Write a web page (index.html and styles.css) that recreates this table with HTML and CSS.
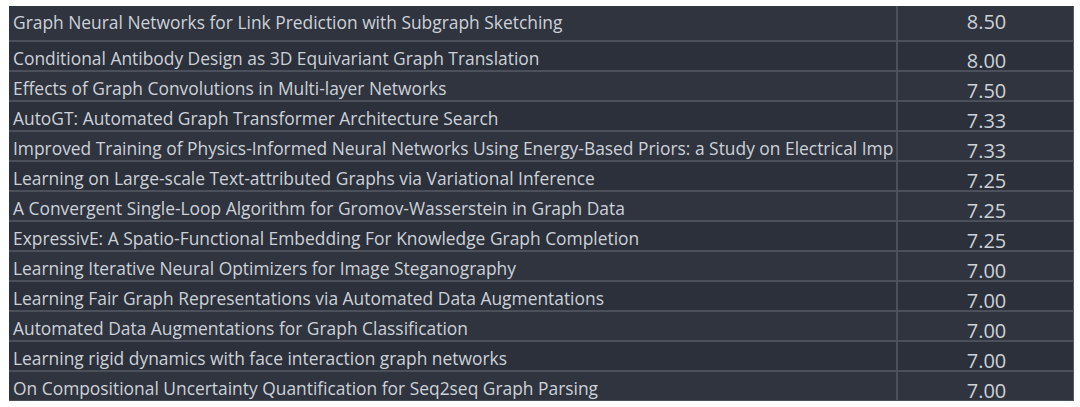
FILE: index.html
```html
<!DOCTYPE html>
<html>
<head>
<meta charset="utf-8">
<link rel="stylesheet" href="styles.css">
</head>
<body>
<div class="frame">
<table class="scores">
<colgroup><col class="c-title"><col class="c-score"></colgroup>
<tbody>
<tr class="first"><td class="title">Graph Neural Networks for Link Prediction with Subgraph Sketching</td><td class="score">8.50</td></tr>
<tr><td class="title">Conditional Antibody Design as 3D Equivariant Graph Translation</td><td class="score">8.00</td></tr>
<tr><td class="title">Effects of Graph Convolutions in Multi-layer Networks</td><td class="score">7.50</td></tr>
<tr><td class="title">AutoGT: Automated Graph Transformer Architecture Search</td><td class="score">7.33</td></tr>
<tr><td class="title">Improved Training of Physics-Informed Neural Networks Using Energy-Based Priors: a Study on Electrical Imp</td><td class="score">7.33</td></tr>
<tr><td class="title">Learning on Large-scale Text-attributed Graphs via Variational Inference</td><td class="score">7.25</td></tr>
<tr><td class="title">A Convergent Single-Loop Algorithm for Gromov-Wasserstein in Graph Data</td><td class="score">7.25</td></tr>
<tr><td class="title">ExpressivE: A Spatio-Functional Embedding For Knowledge Graph Completion</td><td class="score">7.25</td></tr>
<tr><td class="title">Learning Iterative Neural Optimizers for Image Steganography</td><td class="score">7.00</td></tr>
<tr><td class="title">Learning Fair Graph Representations via Automated Data Augmentations</td><td class="score">7.00</td></tr>
<tr><td class="title">Automated Data Augmentations for Graph Classification</td><td class="score">7.00</td></tr>
<tr><td class="title">Learning rigid dynamics with face interaction graph networks</td><td class="score">7.00</td></tr>
<tr><td class="title">On Compositional Uncertainty Quantification for Seq2seq Graph Parsing</td><td class="score">7.00</td></tr>
</tbody>
</table>
</div>
</body>
</html>
```
FILE: styles.css
```css
html, body {
  margin: 0;
  padding: 0;
  background: #ffffff;
}
body {
  padding: 6px 6px 0 9px;
}
.frame {
  width: 1065px;
  height: 395px;
  overflow: hidden;
  background: #2e333e;
}
.scores {
  width: 1065px;
  table-layout: fixed;
  border-collapse: collapse;
  font-family: "Open Sans", "Noto Sans", sans-serif;
  color: #cdd1d8;
  border-right: 2px solid #555a62;
}
.c-title { width: 888px; }
.c-score { width: 177px; }
.scores td {
  padding: 0;
  border-bottom: 2px solid #4b505a;
  white-space: nowrap;
}
.scores tr:nth-child(even) td { background: #2b303a; }
.scores tr:nth-child(odd) td { background: #2f343f; }
.title {
  font-size: 17.4px;
  height: 24px;
  padding: 4px 0 0 4px !important;
  line-height: 24px;
  vertical-align: top;
  overflow: hidden;
  border-right: 2px solid #4b505a;
}
.score {
  font-size: 20px;
  height: 19px;
  text-align: center;
  vertical-align: top;
  line-height: 19px;
  padding: 9px 0 0 2px !important;
}
.first .title {
  height: 34px;
  padding-top: 0 !important;
  line-height: 32px;
}
.first .score {
  height: 34px;
  padding-top: 0 !important;
  line-height: 31px;
}
```
